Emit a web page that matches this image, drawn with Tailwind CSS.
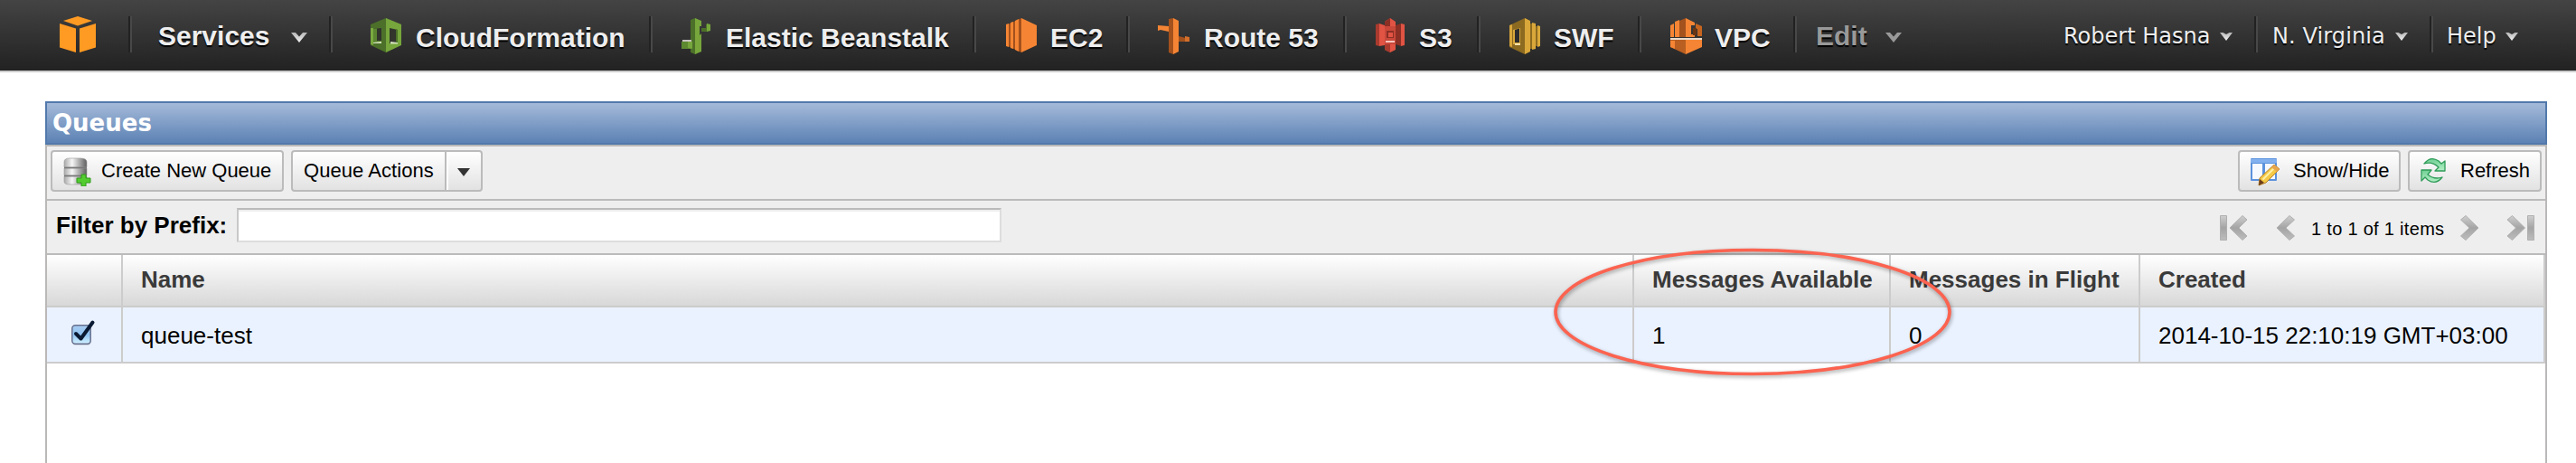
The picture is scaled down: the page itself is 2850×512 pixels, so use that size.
<!DOCTYPE html>
<html lang="en">
<head>
<meta charset="utf-8">
<title>SQS Management Console</title>
<script src="https://cdn.jsdelivr.net/npm/@tailwindcss/browser@4"></script>
</head>
<body class="bg-white w-[2850px] h-[512px] overflow-hidden font-['Liberation_Sans',Arial,sans-serif] text-black">
<svg class="absolute size-0" aria-hidden="true">
  <defs>
    <linearGradient id="metal" x1="0" y1="0" x2="0" y2="1"><stop offset="0" stop-color="#cfcfcf"/><stop offset=".5" stop-color="#a4a4a4"/><stop offset="1" stop-color="#bdbdbd"/></linearGradient>
    <linearGradient id="caret" x1="0" y1="0" x2="0" y2="1"><stop offset="0" stop-color="#b5b5b5"/><stop offset="1" stop-color="#f4f4f4"/></linearGradient>
    <linearGradient id="drum" x1="0" y1="0" x2="1" y2="0"><stop offset="0" stop-color="#a9a9a9"/><stop offset=".35" stop-color="#f6f6f6"/><stop offset="1" stop-color="#5e5e5e"/></linearGradient>
    <linearGradient id="box" x1="0" y1="0" x2="0" y2="1"><stop offset="0" stop-color="#a9cdf1"/><stop offset=".5" stop-color="#8ec3f3"/><stop offset="1" stop-color="#d4f3ff"/></linearGradient>
    <linearGradient id="leaf" x1="0" y1="0" x2="0" y2="1"><stop offset="0" stop-color="#6fcf93"/><stop offset="1" stop-color="#b4f0c6"/></linearGradient>
  </defs>
</svg>

<header class="flex h-20 border-b-2 border-[#ccc] bg-linear-to-b from-[#444] to-[#222] text-[#eee] text-[30px] font-bold leading-[84px] whitespace-nowrap [text-shadow:0_2px_1px_#000]">
  <div class="w-[142px] pl-[66px] pt-[18px]">
    <svg class="block" width="40" height="40" viewBox="0 0 40 40" fill="#ff9a22"><path d="M20 0 36 5 20 10.500 4 5Z"/><path d="M0 8 18 13.500V40L0 34.500Z"/><path d="M40 8 22 13.500V40l18-5.500Z"/></svg>
  </div>
  <div class="flex w-[222px]">
    <i class="mt-[18px] h-10 w-1 border-l-2 border-[#222] bg-[#484848]"></i>
    <span class="ml-[29px] w-[123px] leading-[80px]">Services</span>
    <svg class="mt-9 ml-[24px]" width="18" height="11" viewBox="0 0 18 11"><path d="M0 0h5l4 4.500L13 0h5L9 11Z" fill="url(#caret)"/></svg>
  </div>
  <div class="flex w-[354px]">
    <i class="mt-[18px] h-10 w-1 border-l-2 border-[#222] bg-[#484848]"></i>
    <svg class="mt-5 ml-[42px]" width="34" height="38" viewBox="0 0 34 38"><path d="M17 0 0 7v23l17 8Z" fill="#4c7029"/><path d="m17 0 17 7v23l-17 8Z" fill="#76a63c"/><path d="M0 11h3v19l-3-1Z" fill="#7aaa3f"/><path d="m3 12 9-1v17H3Z" fill="#31352c"/><path d="m3 12 4-.500V25h5v3H3Z" fill="#5b8530"/><path d="m21 11 9 2v15h-9Z" fill="#31352c"/><path d="M3 27l9-1v2H3ZM22 26l8 1v1.500h-8Z" fill="#d4e3bd"/><path d="M28 12.500l2 .500v14h-2Z" fill="#4c7029"/></svg>
    <span class="ml-[16px]">CloudFormation</span>
  </div>
  <div class="flex w-[358px]">
    <i class="mt-[18px] h-10 w-1 border-l-2 border-[#222] bg-[#484848]"></i>
    <svg class="mt-5 ml-[32px]" width="32" height="40" viewBox="0 0 32 40"><path d="m10 2 5-2v40l-5-2Z" fill="#4c7029"/><path d="m15 0 7 3v6h-2v10l2-2v20l-7 3Z" fill="#76a63c"/><path d="M22 11h5v4h-5ZM27 7l2-1v9h-2Z" fill="#4c7029"/><path d="m28 6 4 1v7l-4 1Z" fill="#76a63c"/><path d="M0 26h10v8H0Z" fill="#5d8a30"/><path d="M1 24h10v2H1Z" fill="#c9c3c0"/><path d="M7 26h5v8l-5-1Z" fill="#76a63c"/></svg>
    <span class="ml-[17px]">Elastic Beanstalk</span>
  </div>
  <div class="flex w-[170px]">
    <i class="mt-[18px] h-10 w-1 border-l-2 border-[#222] bg-[#484848]"></i>
    <svg class="mt-5 ml-[33px]" width="34" height="38" viewBox="0 0 34 38"><path d="M17 0 0 8v22l17 8Z" fill="#a3511d"/><path d="m17 0 17 8v22l-17 8Z" fill="#f58534"/><path d="m0 7 3-1v26l-3-1ZM5 5l3-1v30l-3-1ZM10 3l4-2v36l-4-2Z" fill="#f58534"/></svg>
    <span class="ml-[15px]">EC2</span>
  </div>
  <div class="flex w-[240px]">
    <i class="mt-[18px] h-10 w-1 border-l-2 border-[#222] bg-[#484848]"></i>
    <svg class="mt-5 ml-[31px]" width="35" height="40" viewBox="0 0 35 40"><path d="m12 1 5-1v40l-5-2Z" fill="#a3511d"/><path d="m17 0 6 3v34l-6 3Z" fill="#f58534"/><path d="m0 8 12 1v6l-9-2-3 1Z" fill="#f58534"/><path d="m23 20 8 2v4h-8Z" fill="#a3511d"/><path d="m30 20 5 1v5h-5Z" fill="#d46f2a"/></svg>
    <span class="ml-[16px]">Route 53</span>
  </div>
  <div class="flex w-[148px]">
    <i class="mt-[18px] h-10 w-1 border-l-2 border-[#222] bg-[#484848]"></i>
    <svg class="mt-5 ml-[32px]" width="32" height="38" viewBox="0 0 32 38"><path d="m16 0 6 4v6H10V4Z" fill="#e15343"/><path d="m16 0-6 4v6h6Z" fill="#8c2f25"/><path d="M0 7l4-1v25l-4-1Z" fill="#a93a2e"/><path d="m4 6 6 2v22l-6 1Z" fill="#e15343"/><path d="M10 9h12v20H10Z" fill="#c9483a"/><path d="m22 8 6-2v25l-6-2Z" fill="#8c2f25"/><path d="m28 6 4 1v23l-4 1Z" fill="#e15343"/><path d="M12 14h8v8h-8Z" fill="#8c2f25"/><path d="M14 16h5v5h-5Z" fill="#e15343"/><path d="M11 25h10v2H11Z" fill="#f6c4bd"/><path d="M10 29h12v6l-6 3-6-3Z" fill="#e15343"/><path d="M10 29h6v9l-6-3Z" fill="#a93a2e"/></svg>
    <span class="ml-[16px]">S3</span>
  </div>
  <div class="flex w-[178px]">
    <i class="mt-[18px] h-10 w-1 border-l-2 border-[#222] bg-[#484848]"></i>
    <svg class="mt-5 ml-[32px]" width="34" height="40" viewBox="0 0 34 40"><path d="M17 0 0 8v24l17 8Z" fill="#8c6a20"/><path d="m17 0 6 3v34l-6 3Z" fill="#d9a73a"/><path d="m25 5 4 1v28l-4 1ZM31 8l3 1v22l-3 1Z" fill="#d9a73a"/><path d="M23 6h2v28h-2ZM29 9h2v22h-2Z" fill="#8c6a20"/><path d="m0 8 3-1v25l-3-1Z" fill="#d9a73a"/><path d="m4 13 8-2v18H4Z" fill="#d9a73a"/><path d="m6 13 5-1.500V27H6Z" fill="#2c2c2e"/><path d="M6 28h6v2H6Z" fill="#f6e1a8"/></svg>
    <span class="ml-[15px]">SWF</span>
  </div>
  <div class="flex w-[172px]">
    <i class="mt-[18px] h-10 w-1 border-l-2 border-[#222] bg-[#484848]"></i>
    <svg class="mt-5 ml-[32px]" width="35" height="40" viewBox="0 0 35 40"><path d="M0 8l4-2v15H0ZM5 4l5-2v19H5Z" fill="#f58534"/><path d="m10 3 7-3v21h-7Z" fill="#a3511d"/><path d="m17 0 10 5v3h-4v10h4v3H17Z" fill="#f58534"/><path d="m28 6 7 3v11h-5V12h-2Z" fill="#c7651f"/><path d="M25 11h4v8h-4Z" fill="#6b3513"/><path d="M0 22h35v2H0Z" fill="#ead9c9"/><path d="M0 24h17v16L0 32Z" fill="#b95f22"/><path d="M0 25h5v9l-5-2Z" fill="#f58534"/><path d="M17 24h18v8l-18 8Z" fill="#f58534"/></svg>
    <span class="ml-[14px]">VPC</span>
  </div>
  <div class="flex w-[299px]">
    <i class="mt-[18px] h-10 w-1 border-l-2 border-[#222] bg-[#484848]"></i>
    <span class="ml-[21px] w-[55px] leading-[80px] text-[#999]">Edit</span>
    <svg class="mt-9 ml-[22px]" width="18" height="11" viewBox="0 0 18 11"><path d="M0 0h5l4 4.500L13 0h5L9 11Z" fill="#999"/></svg>
  </div>
  <div class="flex font-normal font-['DejaVu_Sans',Verdana,sans-serif] text-[24px] leading-[80px]">
    <div class="flex w-[211px]">
      <span class="w-[173px]">Robert Hasna</span>
      <svg class="mt-9" width="14" height="9" viewBox="0 0 14 9"><path d="M0 0h3.500L7 2l3.500-2H14L7 9Z" fill="url(#caret)"/></svg>
    </div>
    <div class="flex w-[194px]">
      <i class="mt-[18px] h-10 w-1 border-l-2 border-[#222] bg-[#484848]"></i>
      <span class="ml-[16px] w-[136px] tracking-[0.1px]">N. Virginia</span>
      <svg class="mt-9" width="14" height="9" viewBox="0 0 14 9"><path d="M0 0h3.500L7 2l3.500-2H14L7 9Z" fill="url(#caret)"/></svg>
    </div>
    <div class="flex">
      <i class="mt-[18px] h-10 w-1 border-l-2 border-[#222] bg-[#484848]"></i>
      <span class="ml-[15px] w-[65px]">Help</span>
      <svg class="mt-9" width="14" height="9" viewBox="0 0 14 9"><path d="M0 0h3.500L7 2l3.500-2H14L7 9Z" fill="url(#caret)"/></svg>
    </div>
  </div>
</header>

<main class="relative mt-8 ml-[50px] w-[2768px] h-[400px] whitespace-nowrap">
  <h1 class="h-12 border-2 border-[#5279ab] bg-linear-to-b from-[#a5bad9] to-[#5c82b4] pl-[6px] font-['DejaVu_Sans',Verdana,sans-serif] text-[26px] leading-[45px] font-bold text-white">Queues</h1>
  <div class="h-[352px] border-2 border-b-0 border-[#bbb8b8]">
    <div class="flex h-[60px] border-b-2 border-[#bbb] bg-[#eee] px-1 pt-1 text-[22px] leading-[41px]">
      <button class="flex h-[46px] w-[258px] rounded-[4px] border-2 border-[#bbb] bg-linear-to-b from-white to-[#e2e2e3]">
        <svg class="mt-[6px] ml-[11px]" width="32" height="32" viewBox="0 0 32 32"><g fill="url(#drum)" stroke="#9a9a9a" stroke-width=".6"><path d="M2 5q0-4 6-4h12q7 0 7 4v6H2Z"/><path d="M2 12h25v8H2Z"/><path d="M2 21h25v6q-2 3-8 3H8q-6 0-6-3Z"/></g><path d="M2 11.500h25M2 20.500h25" stroke="#777" stroke-width="1.500"/><path d="M21 19h5v4h5v5h-5v4h-5v-4h-5v-5h5Z" fill="#53cc30" stroke="#2f9c18" stroke-width="1"/></svg>
        <span class="ml-[11px]">Create New Queue</span>
      </button>
      <div class="ml-2 flex h-[46px] w-[212px] rounded-[4px] border-2 border-[#bbb] bg-linear-to-b from-white to-[#e2e2e3]">
        <span class="w-[170px] border-r-2 border-[#bbb] pl-[12px] tracking-[0.05px]">Queue Actions</span>
        <span class="flex grow border-l-2 border-white"><svg class="mt-[18px] ml-[9px]" width="16" height="10" viewBox="0 0 16 10"><path d="M1 0h14L8 9Z" fill="#333"/></svg></span>
      </div>
      <button class="ml-auto flex h-[46px] w-[180px] rounded-[4px] border-2 border-[#bbb] bg-linear-to-b from-white to-[#e2e2e3]">
        <svg class="mt-[6px] ml-[11px]" width="34" height="32" viewBox="0 0 34 32"><rect x="1" y="1" width="29" height="25" rx="1" fill="#5c92dd"/><path d="M1 2h29v4H1Z" fill="#83b0ee"/><path d="M3 7h11v17H3ZM17 7h11v17H17Z" fill="#f6f9ff"/><path d="m27 8 6 5-15 15-8 3 1-8Z" fill="#f5c945" stroke="#b57f2a"/><path d="m28.500 10.500-14 14" stroke="#fff0a8" stroke-width="2"/><path d="m27 8 6 5-3 3-6-5Z" fill="#e7a54e"/><path d="m11 24 5 4-6 3Z" fill="#6b3d1c"/></svg>
        <span class="ml-[14px]">Show/Hide</span>
      </button>
      <button class="ml-2 flex h-[46px] w-[148px] rounded-[4px] border-2 border-[#bbb] bg-linear-to-b from-white to-[#e2e2e3]">
        <svg class="mt-[6px] ml-[11px]" width="30" height="30" viewBox="0 0 30 30"><g fill="url(#leaf)" stroke="#2f9b58" stroke-width="1.300" stroke-linejoin="round"><path d="M5 7Q12-2 21 4l3 3 4-3v11H17l4-4Q14 4 5 7Z"/><path d="M25 22q-7 9-16 3l-3-3-4 4V14h11l-4 5q7 6 16 3Z"/></g></svg>
        <span class="ml-[15px]">Refresh</span>
      </button>
    </div>
    <div class="flex h-[60px] border-b-2 border-[#bbb] bg-[#eee]">
      <label class="w-[210px] pl-[10px] text-[26px] leading-[55px] font-bold">Filter by Prefix:</label>
      <input class="mt-2 h-[38px] w-[846px] border-2 border-[#ddd] border-t-[#bbb] border-l-[#c8c8c8] bg-white shadow-[inset_0_2px_1px_#eee]">
      <div class="ml-auto flex pr-[11px] text-[20px] leading-[62px]">
        <svg class="mt-[15px]" width="32" height="30" viewBox="0 0 32 30" fill="url(#metal)" stroke="#b0b0b0"><path d="M1.500 1.500h7v27h-7Z"/><path d="M12 15 26 1.500l5 4.500-9 9 9 9-5 4.500Z"/></svg>
        <svg class="mt-[15px] ml-[31px]" width="22" height="30" viewBox="0 0 22 30" fill="url(#metal)" stroke="#b0b0b0"><path d="M1 15 15 1.500 20.500 6l-9.500 9 9.500 9-5.500 4.500Z"/></svg>
        <span class="ml-[17px] w-[148px] tracking-[0.3px]">1 to 1 of 1 items</span>
        <svg class="mt-[15px] ml-[16px]" width="22" height="30" viewBox="0 0 22 30" fill="url(#metal)" stroke="#b0b0b0"><path d="M21 15 7 1.500 1.500 6l9.500 9-9.500 9L7 28.500Z"/></svg>
        <svg class="mt-[15px] ml-[30px]" width="32" height="30" viewBox="0 0 32 30" fill="url(#metal)" stroke="#b0b0b0"><path d="M20.500 15 6.500 1.500 1 6l9.500 9L1 24l5.500 4.500Z"/><path d="M23.500 1.500h7v27h-7Z"/></svg>
      </div>
    </div>
    <div class="grid h-[58px] w-[2764px] grid-cols-[84px_1672px_284px_276px_448px] border-b-2 border-[#ccc] bg-linear-to-b from-white to-[#d8d8d9] text-[26px] leading-[55px] font-bold text-[#3a3a3a]">
      <div class="border-r-2 border-[#ccc]"></div>
      <div class="border-r-2 border-[#ccc] pl-[20px]">Name</div>
      <div class="border-r-2 border-[#ccc] pl-[20px]">Messages Available</div>
      <div class="border-r-2 border-[#ccc] pl-[20px]">Messages in Flight</div>
      <div class="border-r-2 border-[#ccc] pl-[20px]">Created</div>
    </div>
    <div class="grid h-[62px] w-[2764px] grid-cols-[84px_1672px_284px_276px_448px] border-b-2 border-[#ccc] bg-[#eaf2ff] text-[26px] leading-[62px]">
      <div class="border-r-2 border-[#ccc] pt-3 pl-[26px]"><svg width="28" height="32" viewBox="0 0 28 32"><rect x="2" y="9" width="20.500" height="21" rx="4" fill="#000" opacity=".12"/><rect x="1.800" y="7.800" width="20.400" height="20.400" rx="3.500" fill="url(#box)" stroke="#68718f" stroke-width="1.500"/><path d="m6 17 5.500 5.500L24.500 4.500" fill="none" stroke="#0a1a33" stroke-width="4" stroke-linecap="round" stroke-linejoin="round"/></svg></div>
      <div class="border-r-2 border-[#ccc] pl-[20px]">queue-test</div>
      <div class="border-r-2 border-[#ccc] pl-[20px]">1</div>
      <div class="border-r-2 border-[#ccc] pl-[20px]">0</div>
      <div class="border-r-2 border-[#ccc] pl-[20px]">2014-10-15 22:10:19 GMT+03:00</div>
    </div>
  </div>
  <svg class="absolute top-[156px] left-[1660px] drop-shadow-[1px_2px_2px_rgba(0,0,0,0.35)]" width="460" height="156" viewBox="0 0 460 156"><ellipse cx="229" cy="77" rx="218" ry="68.500" fill="none" stroke="#fb6350" stroke-width="3.600"/></svg>
</main>
</body>
</html>
